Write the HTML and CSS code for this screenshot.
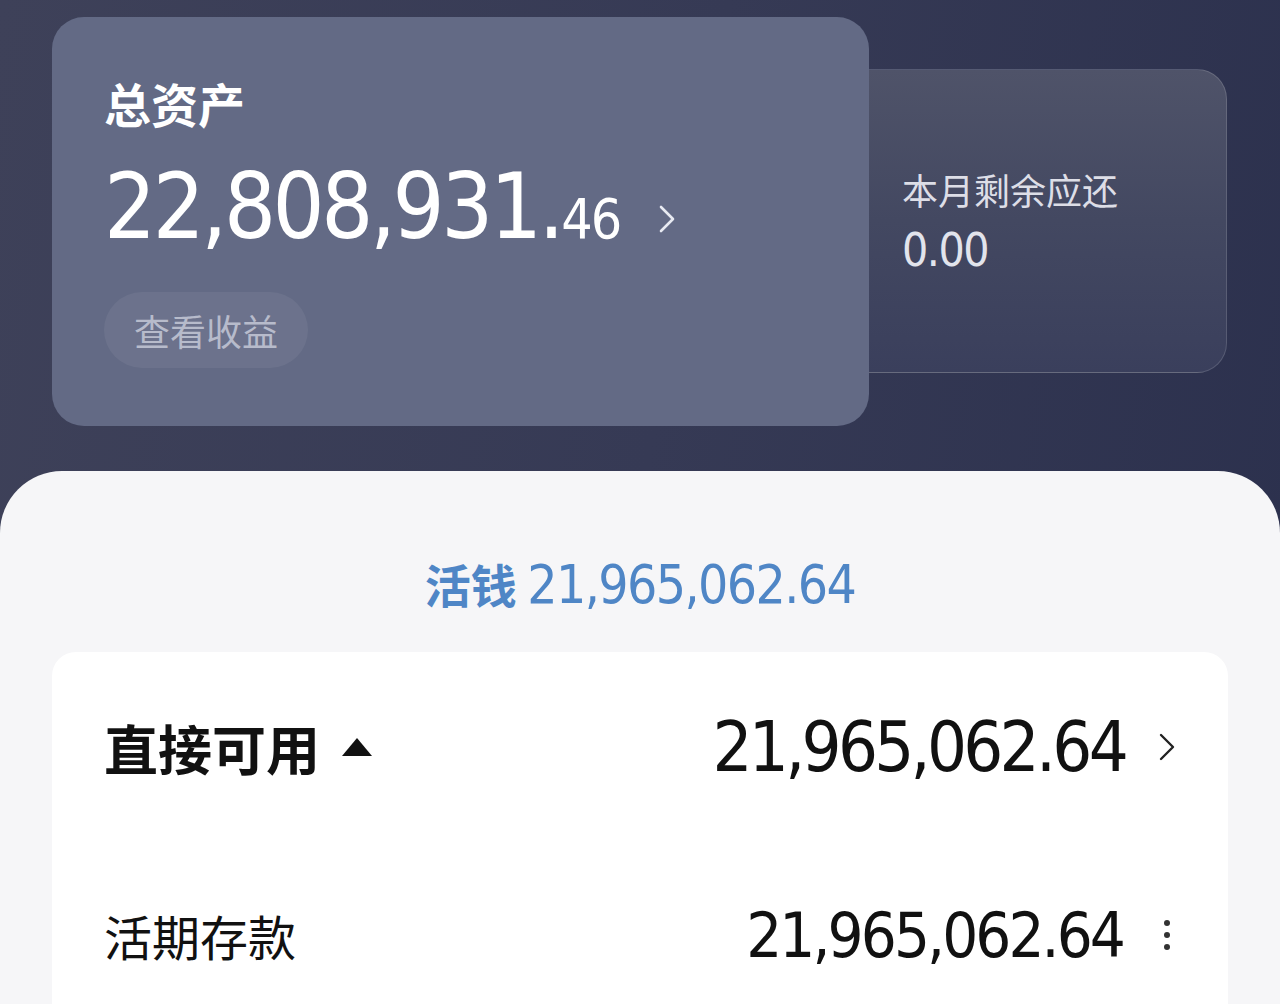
FILE: index.html
```html
<!DOCTYPE html>
<html lang="zh-CN">
<head>
  <meta charset="UTF-8">
  <meta name="viewport" content="width=device-width, initial-scale=1.0">
  <title>我的资产</title>
  <link rel="stylesheet" href="styles.css">
</head>
<body>
  <div class="summary">
    <!-- Total assets card -->
    <div class="asset-card">
      <h2 class="asset-title">总资产</h2>
      <div class="asset-amount">
        <span class="num asset-int">22,808,931.</span><span class="num asset-dec">46</span>
        <svg class="asset-arrow" width="18" height="30" viewBox="0 0 18 30">
          <path d="M3 3 L15 15 L3 27" fill="none" stroke="#e8eaf2" stroke-width="2.6" stroke-linecap="round" stroke-linejoin="round"/>
        </svg>
      </div>
      <button class="income-btn">查看收益</button>
    </div>

    <!-- Repayment card, sits behind the asset card -->
    <div class="repay-card">
      <p class="repay-title">本月剩余应还</p>
      <p class="num repay-amount">0.00</p>
    </div>
  </div>

  <div class="sheet">
    <p class="sheet-title">活钱 <span class="num">21,965,062.64</span></p>

    <div class="fund-card">
      <div class="fund-row fund-row-main">
        <div class="fund-label">
          直接可用
          <svg class="fund-toggle" width="30" height="18" viewBox="0 0 30 18">
            <polygon points="15,0 30,18 0,18" fill="#111"/>
          </svg>
        </div>
        <div class="fund-value">
          <span class="num">21,965,062.64</span>
          <svg class="row-icon" width="20" height="30" viewBox="0 0 20 30">
            <path d="M4 3 L16 15 L4 27" fill="none" stroke="#222" stroke-width="2.4" stroke-linecap="round" stroke-linejoin="round"/>
          </svg>
        </div>
      </div>

      <div class="fund-row fund-row-sub">
        <div class="fund-label">活期存款</div>
        <div class="fund-value">
          <span class="num">21,965,062.64</span>
          <svg class="row-icon" width="20" height="30" viewBox="0 0 20 30">
            <circle cx="10" cy="3" r="3" fill="#333"/>
            <circle cx="10" cy="15" r="3" fill="#333"/>
            <circle cx="10" cy="27" r="3" fill="#333"/>
          </svg>
        </div>
      </div>
    </div>
  </div>
</body>
</html>
```

FILE: styles.css
```css
body {
  margin: 0;
  font-family: "Noto Sans CJK SC", "Noto Sans", sans-serif;
  background: linear-gradient(100deg, #3e4159 0%, #363a55 50%, #2b304d 100%);
  color: #fff;
  overflow: hidden;
}

p,
h2 {
  margin: 0;
}

/* Condensed figures, close to the DIN numbers of the app */
.num {
  font-family: "DejaVu Sans", sans-serif;
  font-stretch: condensed;
}

.summary {
  display: flex;
  align-items: flex-start;
  padding: 17px 52px 0;
  height: 454px;
  box-sizing: border-box;
}

.asset-card {
  position: relative;
  z-index: 1;
  width: 817px;
  height: 409px;
  box-sizing: border-box;
  padding: 58px 52px 0;
  background-color: #636a85;
  border-radius: 32px;
}

.asset-title {
  font-size: 47px;
  font-weight: 700;
  line-height: 56px;
  color: #fff;
}

.asset-amount {
  display: flex;
  align-items: baseline;
  margin-top: 26px;
  line-height: 100px;
}

.asset-int {
  font-size: 91px;
  letter-spacing: -3.4px;
  color: #fff;
}

.asset-dec {
  font-size: 55px;
  letter-spacing: -2px;
  color: #fff;
}

.asset-arrow {
  margin-left: 38px;
  align-self: center;
  margin-top: 12px;
}

.income-btn {
  display: block;
  margin-top: 23px;
  height: 76px;
  padding: 0 30px;
  border: none;
  border-radius: 38px;
  background-color: rgba(255, 255, 255, 0.06);
  color: #b7bbcb;
  font-family: "Noto Sans CJK SC", sans-serif;
  font-size: 36px;
}

.repay-card {
  display: flex;
  flex-direction: column;
  justify-content: center;
  margin-top: 52px;
  margin-left: -40px;
  width: 398px;
  height: 304px;
  box-sizing: border-box;
  padding-left: 72px;
  background: linear-gradient(180deg, #4f5369 0%, #434861 50%, #3a3f5c 100%);
  border: 1.5px solid rgba(255, 255, 255, 0.14);
  border-radius: 30px;
}

.repay-title {
  font-size: 36px;
  line-height: 44px;
  color: #dddee7;
}

.repay-amount {
  margin-top: 14px;
  font-size: 46px;
  letter-spacing: -1.5px;
  line-height: 50px;
  color: #e2e4ec;
}

.sheet {
  margin-top: 17px;
  height: 540px;
  background-color: #f6f6f8;
  border-radius: 62px 62px 0 0;
  padding-top: 84px;
  box-sizing: border-box;
}

.sheet-title {
  text-align: center;
  font-size: 46px;
  font-weight: 700;
  line-height: 56px;
  color: #4f86c6;
}

.sheet-title .num {
  font-size: 53px;
  font-weight: 400;
  letter-spacing: -1.6px;
}

.fund-card {
  margin: 39px 52px 0;
  height: 400px;
  background-color: #fff;
  border-radius: 24px;
}

.fund-row {
  display: flex;
  justify-content: space-between;
  align-items: center;
  padding: 0 51px 0 52px;
  height: 190px;
}

.fund-label {
  display: flex;
  align-items: center;
  color: #111;
}

.fund-row-main .fund-label {
  font-size: 54px;
  font-weight: 700;
}

.fund-toggle {
  margin-left: 22px;
}

.fund-row-sub {
  height: 186px;
}

.fund-row-sub .fund-label {
  font-size: 48px;
  font-weight: 400;
}

.fund-value {
  display: flex;
  align-items: center;
  color: #111;
}

.fund-row-main .fund-value .num {
  font-size: 70px;
  letter-spacing: -3.7px;
}

.fund-row-sub .fund-value .num {
  font-size: 63px;
  letter-spacing: -2.9px;
}

.row-icon {
  margin-left: 32px;
}

.fund-row-sub .row-icon {
  margin-left: 34px;
}
```
